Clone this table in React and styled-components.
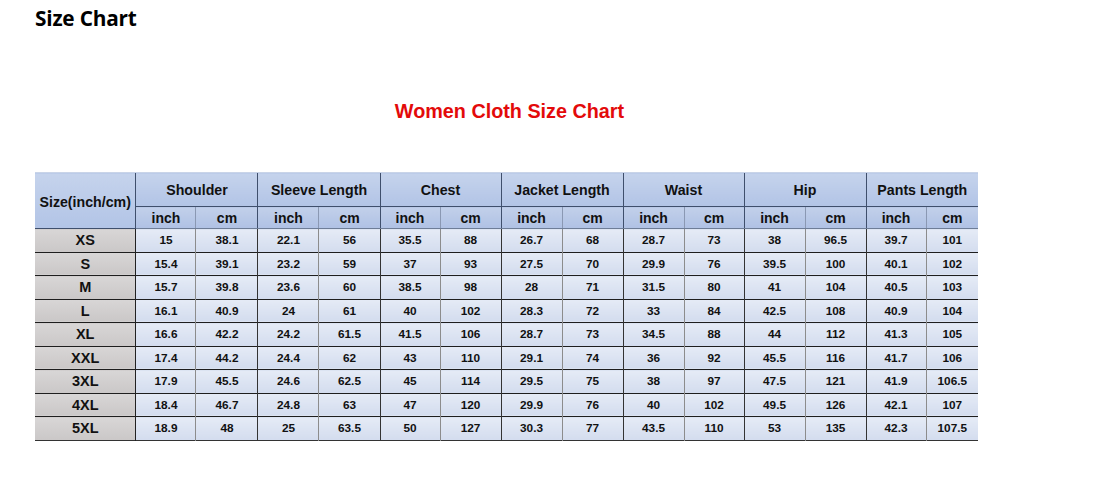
import React from "react";
import styled, { createGlobalStyle } from "styled-components";

const GlobalStyle = createGlobalStyle`
  html, body {
    margin: 0;
    padding: 0;
    background: #ffffff;
  }
`;

const groups = [
  { name: "Shoulder", cols: [60, 62] },
  { name: "Sleeve Length", cols: [61, 61] },
  { name: "Chest", cols: [60, 61] },
  { name: "Jacket Length", cols: [61, 61] },
  { name: "Waist", cols: [61, 60] },
  { name: "Hip", cols: [61, 61] },
  { name: "Pants Length", cols: [60, 52] },
];

const rows = [
  ["XS", "15", "38.1", "22.1", "56", "35.5", "88", "26.7", "68", "28.7", "73", "38", "96.5", "39.7", "101"],
  ["S", "15.4", "39.1", "23.2", "59", "37", "93", "27.5", "70", "29.9", "76", "39.5", "100", "40.1", "102"],
  ["M", "15.7", "39.8", "23.6", "60", "38.5", "98", "28", "71", "31.5", "80", "41", "104", "40.5", "103"],
  ["L", "16.1", "40.9", "24", "61", "40", "102", "28.3", "72", "33", "84", "42.5", "108", "40.9", "104"],
  ["XL", "16.6", "42.2", "24.2", "61.5", "41.5", "106", "28.7", "73", "34.5", "88", "44", "112", "41.3", "105"],
  ["XXL", "17.4", "44.2", "24.4", "62", "43", "110", "29.1", "74", "36", "92", "45.5", "116", "41.7", "106"],
  ["3XL", "17.9", "45.5", "24.6", "62.5", "45", "114", "29.5", "75", "38", "97", "47.5", "121", "41.9", "106.5"],
  ["4XL", "18.4", "46.7", "24.8", "63", "47", "120", "29.9", "76", "40", "102", "49.5", "126", "42.1", "107"],
  ["5XL", "18.9", "48", "25", "63.5", "50", "127", "30.3", "77", "43.5", "110", "53", "135", "42.3", "107.5"],
];

function App() {
  return (
    <>
      <GlobalStyle />
      <Page>
        <PageTitle>Size Chart</PageTitle>
        <ChartBox>
          <ChartTitle>Women Cloth Size Chart</ChartTitle>
          <Table>
            <colgroup>
              <col style={{ width: 101 }} />
              {groups.flatMap((g) =>
                g.cols.map((w, i) => <col key={g.name + i} style={{ width: w }} />)
              )}
            </colgroup>
            <thead>
              <GroupRow>
                <HeadCell rowSpan={2} $first>
                  Size(inch/cm)
                </HeadCell>
                {groups.map((g) => (
                  <HeadCell key={g.name} colSpan={2}>
                    {g.name}
                  </HeadCell>
                ))}
              </GroupRow>
              <UnitRow>
                {groups.map((g) => (
                  <React.Fragment key={g.name}>
                    <UnitCell>inch</UnitCell>
                    <UnitCell $cm>cm</UnitCell>
                  </React.Fragment>
                ))}
              </UnitRow>
            </thead>
            <tbody>
              {rows.map((r, ri) => (
                <DataRow key={r[0]} $last={ri === rows.length - 1}>
                  <SizeCell>{r[0]}</SizeCell>
                  {r.slice(1).map((v, i) => (
                    <ValueCell key={i} $cm={i % 2 === 1}>
                      {v}
                    </ValueCell>
                  ))}
                </DataRow>
              ))}
            </tbody>
          </Table>
        </ChartBox>
      </Page>
    </>
  );
}

const Page = styled.div`
  width: 1100px;
  height: 492px;
  padding: 5px 0 0 35px;
  box-sizing: border-box;
`;

const PageTitle = styled.h1`
  margin: 0;
  font-family: "Open Sans", "Noto Sans", sans-serif;
  font-weight: 700;
  font-size: 20.8px;
  line-height: 27px;
  color: #000;
  letter-spacing: -0.2px;
`;

const ChartBox = styled.div`
  width: 943px;
  display: flex;
  flex-direction: column;
  align-items: center;
`;

const ChartTitle = styled.h2`
  margin: 67px 0 0 6px;
  font-family: "Liberation Sans", Arial, sans-serif;
  font-weight: 700;
  font-size: 19.8px;
  line-height: 24px;
  color: #e30a0a;
`;

const Table = styled.table`
  margin-top: 49px;
  width: 943px;
  table-layout: fixed;
  border-collapse: collapse;
  font-family: "Liberation Sans", Arial, sans-serif;
  font-weight: 700;
  color: #111;
`;

const GroupRow = styled.tr`
  height: 34px;
`;

const UnitRow = styled.tr`
  height: 22px;
`;

const HeadCell = styled.th`
  padding: 0;
  font-size: 14.2px;
  font-weight: 700;
  text-align: center;
  white-space: nowrap;
  background: linear-gradient(#c5d3ec, #b2c4e6);
  border-top: 1px solid #c9d4e8;
  border-left: 1px solid #3f4f6c;
  border-bottom: 1px solid #3f4f6c;
  ${(p) => p.$first && `border-left: none; padding-top: 2px;`}
`;

const UnitCell = styled.th`
  padding: 0;
  font-size: 14px;
  font-weight: 700;
  text-align: center;
  background: linear-gradient(#c2d0ea, #afc1e4);
  border-bottom: 1px solid #6e7d97;
  border-left: ${(p) => (p.$cm ? "1px solid #8a98b3" : "1px solid #3f4f6c")};
`;

const DataRow = styled.tr`
  height: 23.5px;
  border-bottom: ${(p) => (p.$last ? "1.5px solid #333" : "1.5px solid #1e1e1e")};
`;

const SizeCell = styled.td`
  padding: 0;
  font-size: 14.5px;
  text-align: center;
  background: linear-gradient(#d8d6d6, #cac7c7);
  border-right: 1px solid #222;
`;

const ValueCell = styled.td`
  padding: 0;
  font-size: 11.8px;
  text-align: center;
  background: linear-gradient(#e5ebf6, #d3dcee);
  border-left: ${(p) => (p.$cm ? "1px solid #8c8c8c" : "1px solid #333")};
`;

export default App;
